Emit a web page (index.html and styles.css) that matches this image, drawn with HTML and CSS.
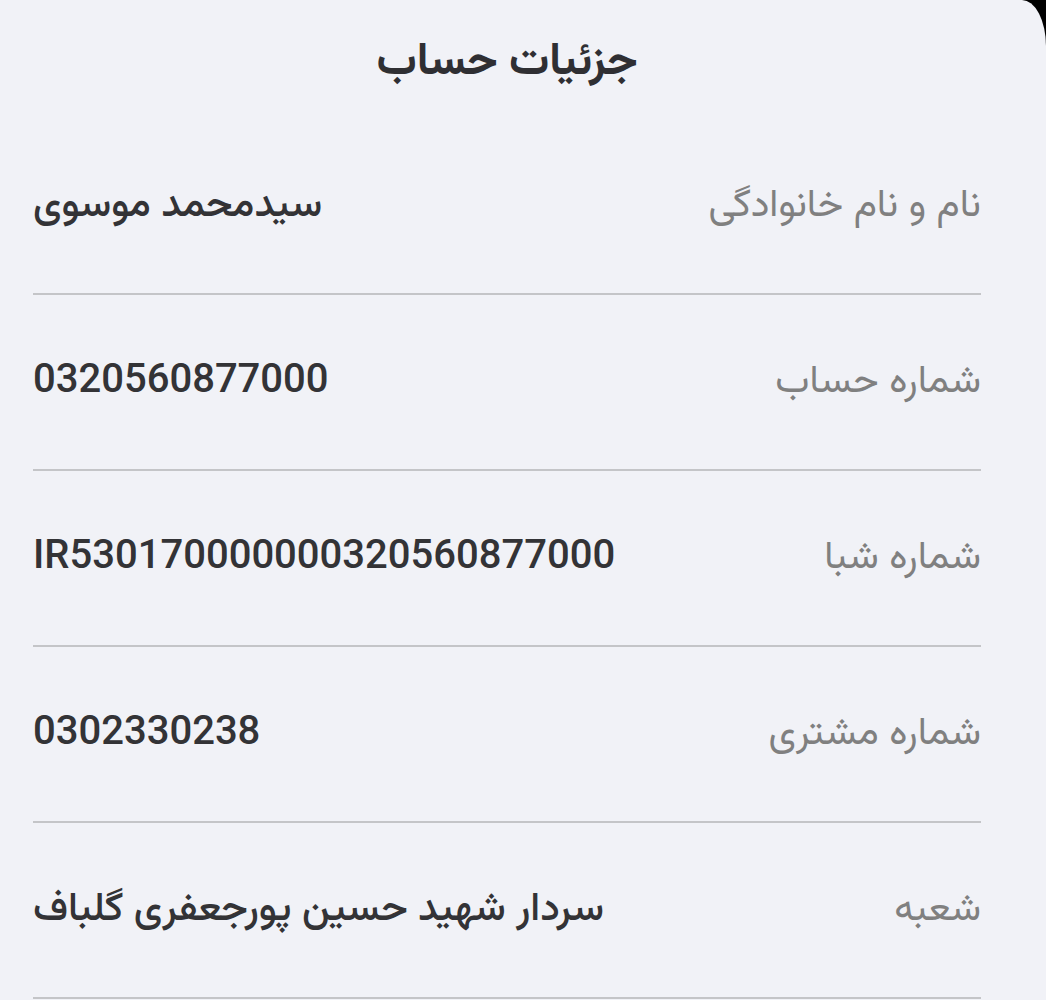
FILE: index.html
```html
<!DOCTYPE html>
<html lang="fa" dir="rtl">
<head>
<meta charset="utf-8">
<title>جزئیات حساب</title>
<link rel="stylesheet" href="styles.css">
</head>
<body>
<main class="sheet">
  <h1 class="title">جزئیات حساب</h1>
  <ul class="rows">
    <li class="row"><span class="label">نام و نام خانوادگی</span><span class="value">سیدمحمد موسوی</span></li>
    <li class="row"><span class="label">شماره حساب</span><span class="value num">0320560877000</span></li>
    <li class="row"><span class="label">شماره شبا</span><span class="value num">IR530170000000320560877000</span></li>
    <li class="row"><span class="label">شماره مشتری</span><span class="value num">0302330238</span></li>
    <li class="row"><span class="label">شعبه</span><span class="value">سردار شهید حسین پورجعفری گلباف</span></li>
  </ul>
</main>
</body>
</html>
```
FILE: styles.css
```css
html, body {
  margin: 0;
  padding: 0;
  background: #000;
  height: 100%;
}
body {
  font-family: "Vazirmatn", "Noto Sans Arabic", "DejaVu Sans", sans-serif;
  overflow: hidden;
}
.sheet {
  background: #f1f2f7;
  min-height: 1000px;
  border-top-right-radius: 24px 46px;
  padding: 0 65px 0 33px;
  box-sizing: border-box;
}
.title {
  margin: 0;
  height: 119px;
  display: flex;
  align-items: center;
  justify-content: center;
  font-size: 45px;
  font-weight: 700;
  color: #2f2f33;
  padding-top: 6px;
  box-sizing: border-box;
}
.rows {
  list-style: none;
  margin: 0;
  padding: 0;
}
.row {
  height: 176px;
  box-sizing: border-box;
  border-bottom: 2px solid #c4c5c8;
  display: flex;
  align-items: center;
  justify-content: space-between;
}
.label {
  font-size: 39px;
  color: #808080;
}
.value {
  font-size: 40px;
  color: #333336;
  font-weight: 500;
}
.num {
  direction: ltr;
  unicode-bidi: isolate;
}
```
